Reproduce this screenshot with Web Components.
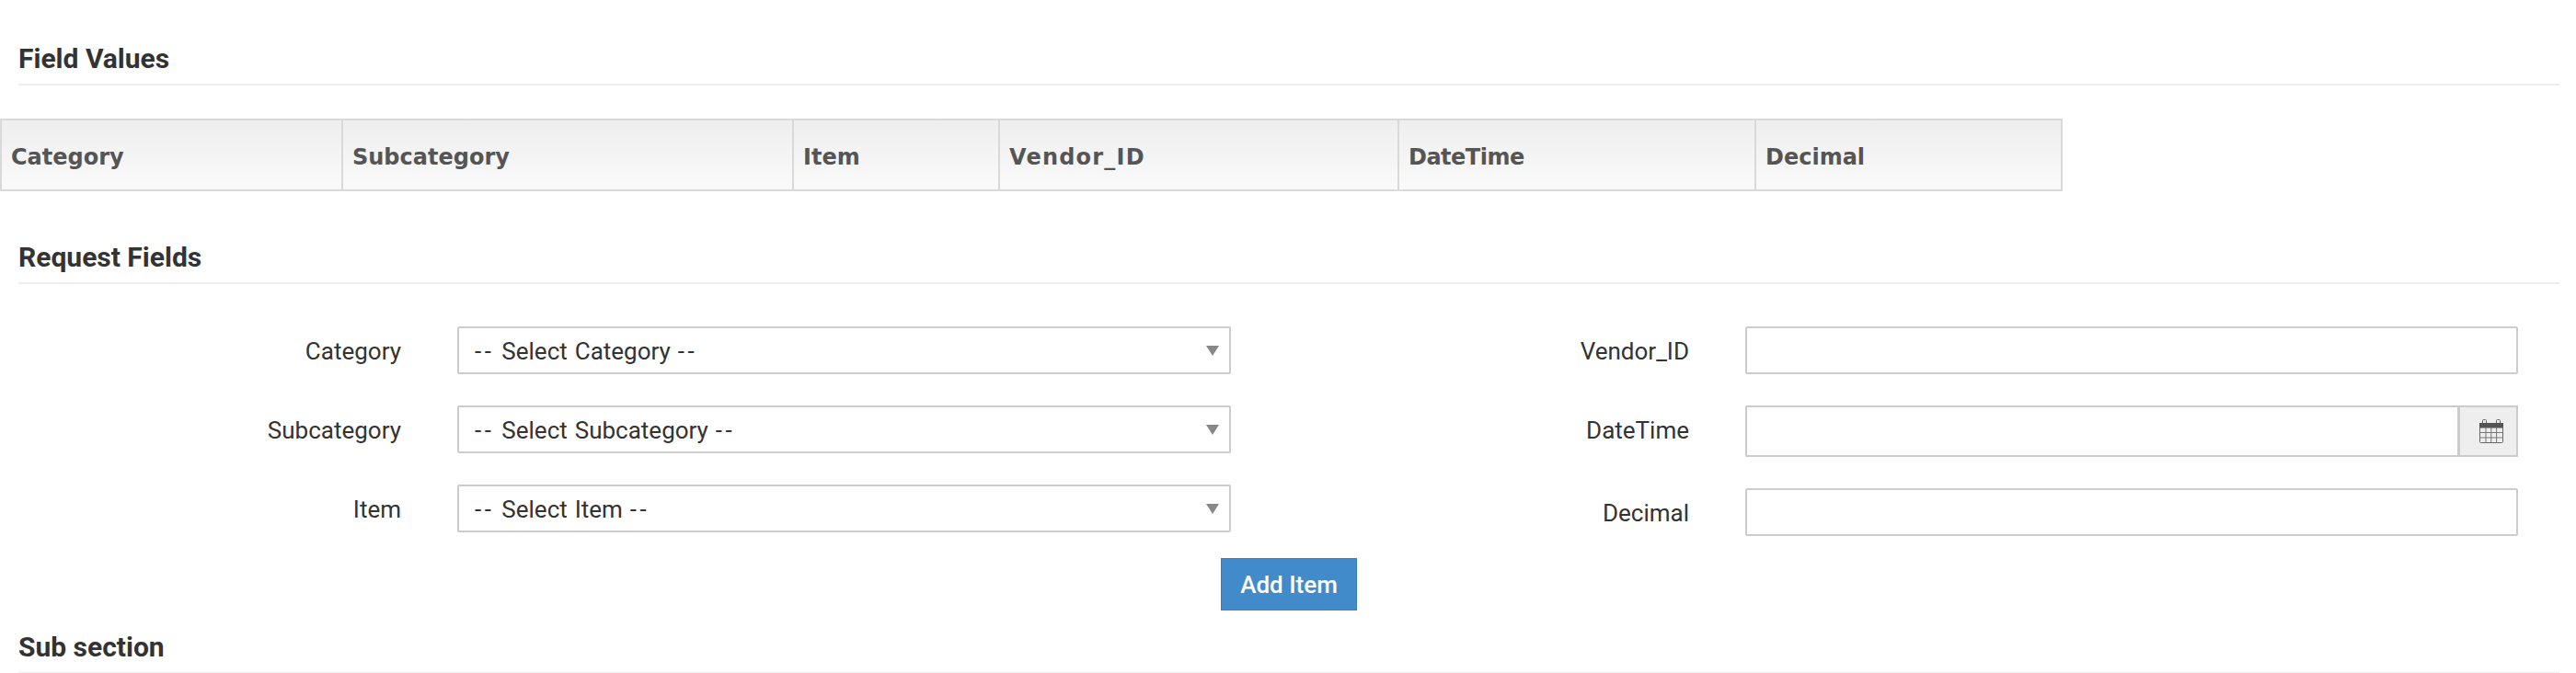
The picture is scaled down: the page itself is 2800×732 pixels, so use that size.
<!DOCTYPE html>
<html lang="en">
<head>
<meta charset="utf-8">
<title>Field Values</title>
<style>
  html, body { margin: 0; height: 732px; overflow: hidden; background: #fff; }
  body { font-family: Roboto, "Liberation Sans", sans-serif; color: #333; }
</style>
</head>
<body>
<section-heading style="padding-top:47px">Field Values</section-heading>
<values-table columns="371,490,224,434,388,335">
  <span>Category</span><span>Subcategory</span><span>Item</span><span style="letter-spacing:1.2px">Vendor_ID</span><span style="letter-spacing:-0.5px">DateTime</span><span>Decimal</span>
</values-table>
<section-heading style="margin-top:55px">Request Fields</section-heading>
<request-form>
  <form-field slot="left" label="Category"><select-box name="Select Category"></select-box></form-field>
  <form-field slot="left" label="Subcategory"><select-box name="Select Subcategory"></select-box></form-field>
  <form-field slot="left" label="Item"><select-box name="Select Item"></select-box></form-field>
  <form-field slot="right" label="Vendor_ID"><text-box></text-box></form-field>
  <form-field slot="right" label="DateTime"><date-box></date-box></form-field>
  <form-field slot="right" label="Decimal"><text-box></text-box></form-field>
  <action-button slot="actions">Add Item</action-button>
</request-form>
<section-heading style="margin-top:23px">Sub section</section-heading>

<script>
class SectionHeading extends HTMLElement {
  constructor() {
    super();
    this.attachShadow({ mode: "open" });
    this.shadowRoot.innerHTML = `
      <style>
        :host { display: block; margin: 0 18px 0 20px; }
        h2 {
          margin: 0;
          font: 700 30px/34px Roboto, sans-serif;
          color: #333;
          padding-bottom: 10px;
          border-bottom: 2px solid #eee;
        }
      </style>
      <h2><slot></slot></h2>
    `;
  }
}

class ValuesTable extends HTMLElement {
  constructor() {
    super();
    this.attachShadow({ mode: "open" });
  }

  connectedCallback() {
    const columns = (this.getAttribute("columns") || "").split(",").map(c => c + "px").join(" ");
    this.shadowRoot.innerHTML = `
      <style>
        :host { display: block; margin-top: 36px; }
        .row {
          display: grid;
          grid-template-columns: ${columns};
          width: max-content;
          height: 79px;
          box-sizing: border-box;
          border: solid #d9d9d9;
          border-width: 2px 0;
          background: linear-gradient(#eee, #fafafa);
          font: 700 24px/80px "DejaVu Sans", sans-serif;
          color: #555;
        }
        ::slotted(span) {
          box-sizing: border-box;
          height: 75px;
          padding-left: 10px;
          border-left: 2px solid #d9d9d9;
          white-space: nowrap;
        }
        ::slotted(span:last-child) { border-right: 2px solid #d9d9d9; }
      </style>
      <div class="row"><slot></slot></div>
    `;
  }
}

class RequestForm extends HTMLElement {
  constructor() {
    super();
    this.attachShadow({ mode: "open" });
    this.shadowRoot.innerHTML = `
      <style>
        :host { display: block; padding-top: 46px; }
        .fields {
          display: grid;
          grid-template-columns: 1338px 1337px;
          column-gap: 62px;
          align-items: start;
        }
        .column { display: flex; flex-direction: column; gap: 34px; }
        .actions { display: flex; justify-content: center; margin-top: 24px; padding-left: 2px; }
      </style>
      <div class="fields">
        <div class="column"><slot name="left"></slot></div>
        <div class="column"><slot name="right"></slot></div>
      </div>
      <div class="actions"><slot name="actions"></slot></div>
    `;
  }
}

class FormField extends HTMLElement {
  constructor() {
    super();
    this.attachShadow({ mode: "open" });
  }

  connectedCallback() {
    this.shadowRoot.innerHTML = `
      <style>
        :host { display: grid; grid-template-columns: 436px 1fr; column-gap: 61px; align-items: start; }
        label { font: 400 26px/50px Roboto, sans-serif; padding-top: 2px; color: #333; text-align: right; }
      </style>
      <label>${this.getAttribute("label")}</label>
      <slot></slot>
    `;
  }
}

class SelectBox extends HTMLElement {
  constructor() {
    super();
    this.attachShadow({ mode: "open" });
  }

  connectedCallback() {
    this.shadowRoot.innerHTML = `
      <style>
        :host {
          display: flex;
          align-items: center;
          justify-content: space-between;
          height: 52px;
          box-sizing: border-box;
          padding: 0 11px 0 17px;
          border: 2px solid #ccc;
          border-radius: 2px;
          background: #fff;
          font: 400 26px/46px Roboto, sans-serif;
          word-spacing: 1.5px;
          color: #333;
        }
        .value { padding-top: 2px; white-space: pre; }
        .dash { letter-spacing: 3.5px; }
        .arrow {
          width: 0;
          height: 0;
          border-style: solid;
          border-width: 11px 7.5px 0;
          border-color: #888 transparent transparent;
        }
      </style>
      <span class="value"><span class="dash">--</span> ${this.getAttribute("name")} <span class="dash">--</span></span>
      <span class="arrow"></span>
    `;
  }
}

class TextBox extends HTMLElement {
  constructor() {
    super();
    this.attachShadow({ mode: "open" });
    this.shadowRoot.innerHTML = `
      <style>
        :host { display: block; }
        input {
          display: block;
          width: 100%;
          height: 52px;
          box-sizing: border-box;
          border: 2px solid #ccc;
          border-radius: 2px;
          outline: 0;
          background: #fff;
        }
      </style>
      <input type="text">
    `;
  }
}

class DateBox extends HTMLElement {
  constructor() {
    super();
    this.attachShadow({ mode: "open" });
    this.shadowRoot.innerHTML = `
      <style>
        :host { display: flex; height: 56px; }
        input {
          flex: 1;
          min-width: 0;
          box-sizing: border-box;
          border: 2px solid #ccc;
          border-right: 0;
          border-radius: 2px 0 0 2px;
          outline: 0;
          background: #fff;
        }
        .addon {
          flex: none;
          display: flex;
          align-items: center;
          justify-content: center;
          width: 66px;
          box-sizing: border-box;
          padding-left: 6px;
          border: 2px solid #ccc;
          border-left-width: 3px;
          background: #eee;
        }
        svg { display: block; }
      </style>
      <input type="text">
      <span class="addon">
        <svg width="26" height="26" viewBox="0 0 26 26" fill="none">
          <rect x="0.5" y="4.5" width="25" height="21" rx="1" stroke="#666"/>
          <rect x="0" y="4" width="26" height="5.5" fill="#555"/>
          <path d="M3.5 4V1.5a1 1 0 0 1 1-1h2a1 1 0 0 1 1 1V4M18.5 4V1.5a1 1 0 0 1 1-1h2a1 1 0 0 1 1 1V4" stroke="#666"/>
          <path d="M7 9v16M12.8 9v16M18.6 9v16M0 14.5h26M0 20h26" stroke="#777"/>
        </svg>
      </span>
    `;
  }
}

class ActionButton extends HTMLElement {
  constructor() {
    super();
    this.attachShadow({ mode: "open" });
    this.shadowRoot.innerHTML = `
      <style>
        :host { display: block; }
        button {
          display: block;
          width: 148px;
          height: 57px;
          padding: 0;
          border: 1px solid #3a7fbf;
          border-radius: 0;
          background: #428bca;
          color: #fff;
          font: 500 26px/1 Roboto, sans-serif;
        }
      </style>
      <button type="button"><slot></slot></button>
    `;
  }
}

customElements.define("section-heading", SectionHeading);
customElements.define("values-table", ValuesTable);
customElements.define("request-form", RequestForm);
customElements.define("form-field", FormField);
customElements.define("select-box", SelectBox);
customElements.define("text-box", TextBox);
customElements.define("date-box", DateBox);
customElements.define("action-button", ActionButton);
</script>
</body>
</html>
